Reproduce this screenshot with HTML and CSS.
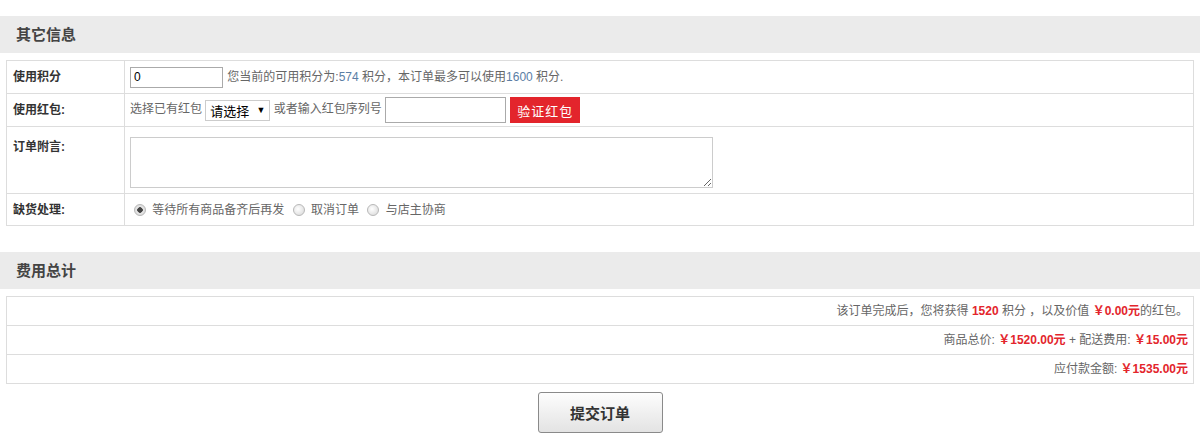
FILE: index.html
```html
<!DOCTYPE html>
<html lang="zh-CN">
<head>
  <meta charset="utf-8">
  <title>订单确认</title>
  <link rel="stylesheet" href="styles.css">
</head>
<body>

<div class="block">
  <h3 class="block-title">其它信息</h3>
  <table class="form">
    <tr class="r1">
      <th>使用积分</th>
      <td>
        <input class="txt pts" type="text" value="0">
        您当前的可用积分为:<span class="num">574</span> 积分，本订单最多可以使用<span class="num">1600</span> 积分.
      </td>
    </tr>
    <tr class="r2">
      <th>使用红包:</th>
      <td>
        选择已有红包
        <span class="sel"><select><option>请选择</option></select></span>
        或者输入红包序列号
        <input class="txt code" type="text">
        <button class="btn-red">验证红包</button>
      </td>
    </tr>
    <tr class="r3">
      <th>订单附言:</th>
      <td><textarea class="memo"></textarea></td>
    </tr>
    <tr class="r4">
      <th>缺货处理:</th>
      <td>
        <label><input type="radio" name="oos" checked> 等待所有商品备齐后再发</label>
        <label><input type="radio" name="oos"> 取消订单</label>
        <label><input type="radio" name="oos"> 与店主协商</label>
      </td>
    </tr>
  </table>
</div>

<div class="block">
  <h3 class="block-title">费用总计</h3>
  <table class="total">
    <tr><td>该订单完成后，您将获得 <b class="red">1520</b> 积分 ，以及价值 <b class="red">￥0.00元</b>的红包。</td></tr>
    <tr><td>商品总价: <b class="red">￥1520.00元</b> + 配送费用: <b class="red">￥15.00元</b></td></tr>
    <tr><td>应付款金额: <b class="red">￥1535.00元</b></td></tr>
  </table>
</div>

<div class="submit">
  <button class="btn-submit">提交订单</button>
</div>

</body>
</html>
```

FILE: styles.css
```css
:root { --line:#ddd; --red:#e3252c; --title:#ebebeb; }
body{margin:0;padding-top:16px;background:#fff;color:#666;
     font:12px/16px "Liberation Sans","Noto Sans CJK SC",sans-serif}

.block{margin-bottom:26px}
.block-title{margin:0;height:37px;line-height:37px;padding-left:16px;background:var(--title);
             font-size:15px;font-weight:700;color:#444}

table{border-collapse:collapse;margin:7px 6px 0;width:1188px}
td,th{border:1px solid var(--line);padding:0}

.form th{width:111px;padding-left:6px;text-align:left;color:#333;font-weight:700;font-size:12px}
.form td{padding-left:5px;white-space:nowrap}
.form .r1 td,.form .r1 th{height:32px}
.form .r2 td,.form .r2 th{height:32px}
.form .r3 th{vertical-align:top;padding-top:12px}
.form .r3 td{padding:10px 0 5px 5px}
.form .r4 td,.form .r4 th{height:31px}

.num{color:#5b7ea5}

.txt{box-sizing:border-box;border:1px solid #aaa;padding:0 3px;font:12px "Liberation Sans",sans-serif;
     vertical-align:middle;margin:0}
.pts{width:93px;height:21px;color:#000;margin-right:1px}
.code{width:121px;height:26px;margin:0 1px 0 0}

.sel{position:relative;display:inline-block;vertical-align:middle;margin:0}
.sel select{appearance:none;-webkit-appearance:none;width:65px;height:21px;border:1px solid #ccc;
            background:#fff;font:13px "Noto Sans CJK SC",sans-serif;color:#000;padding:0 0 0 4px;margin:0}
.sel::after{content:"▼";position:absolute;right:5px;top:4px;font-size:9px;line-height:12px;color:#000;pointer-events:none}

.btn-red{height:26px;width:70px;border:none;background:var(--red);color:#fff;vertical-align:middle;
         font:13px "Noto Sans CJK SC",sans-serif;padding:0;margin:0;letter-spacing:1px}

.memo{display:block;box-sizing:border-box;width:583px;height:51px;border:1px solid #ccc;margin:0;resize:both}

.r4 td{padding-left:9px}
.r4 label{margin-right:5px}
input[type=radio]{appearance:none;-webkit-appearance:none;width:12px;height:12px;border-radius:50%;
                  margin:0 3px 0 0;vertical-align:-2px;border:1px solid #b9b9b9;
                  background:radial-gradient(circle at 40% 40%,#fff,#d6d6d6)}
input[type=radio]:checked{background:radial-gradient(circle,#444 0 2.5px,#e8e8e8 3px,#d0d0d0)}

.total td{height:28px;text-align:right;padding-right:5px;color:#666}
.red{color:var(--red)}

.submit{text-align:center;margin-top:-18px}
.btn-submit{width:125px;height:41px;border:1px solid #8a8a8a;border-radius:3px;
            background:linear-gradient(#fdfdfd,#e3e3e3);color:#333;
            font:700 15px "Noto Sans CJK SC",sans-serif;cursor:pointer}
```
